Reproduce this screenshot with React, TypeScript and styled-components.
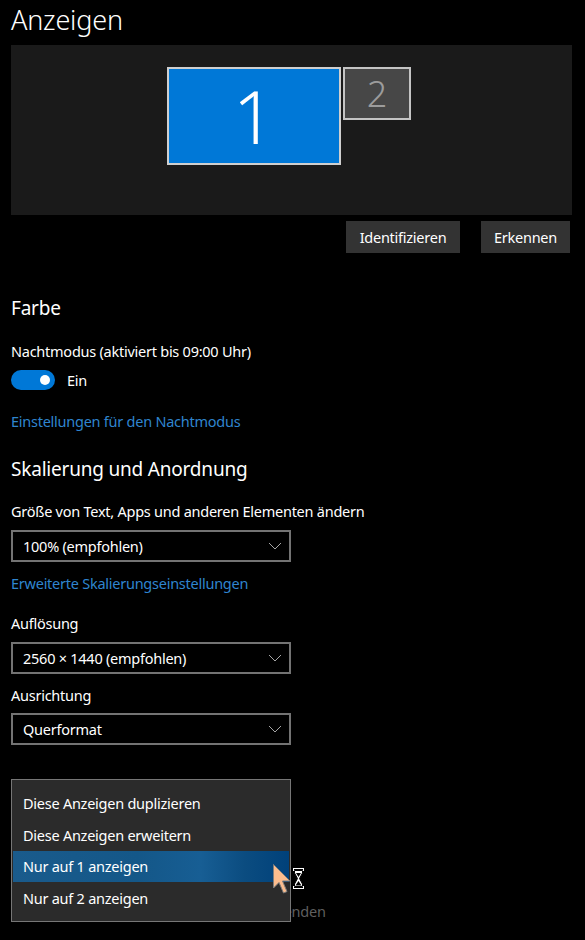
import React from "react";
import styled, { createGlobalStyle } from "styled-components";

const Global = createGlobalStyle`
  html, body { margin: 0; padding: 0; background: #000; }
  body { font-family: "Noto Sans", "Open Sans", sans-serif; color: #fff; }
  * { box-sizing: border-box; }
`;

const Page = styled.div`
  width: 585px;
  height: 940px;
  overflow: hidden;
  padding: 0 13px 0 11px;
  background: #000;
  display: flex;
  flex-direction: column;
`;

const Title = styled.h1`
  margin: 0;
  font-size: 27px;
  letter-spacing: -0.2px;
  font-weight: 300;
  line-height: 40px;
  height: 40px;
  color: #fff;
`;

const Preview = styled.div`
  margin-top: 5px;
  height: 170px;
  background: #1a1a1a;
  display: flex;
  justify-content: center;
  align-items: flex-start;
  gap: 2px;
  padding-top: 22px;
  padding-right: 5px;
`;

const Monitor = styled.div<{ $w: number; $h: number; $active?: boolean }>`
  width: ${(p) => p.$w}px;
  height: ${(p) => p.$h}px;
  border: 2px solid ${(p) => (p.$active ? "#cfcfcf" : "#c4c4c4")};
  background: ${(p) => (p.$active ? "#0078d7" : "#474747")};
  color: ${(p) => (p.$active ? "#fff" : "#9c9c9c")};
  display: flex;
  align-items: center;
  justify-content: center;
  font-weight: 300;
  font-size: ${(p) => (p.$active ? 74 : 36)}px;
  line-height: 1;
`;

const ButtonRow = styled.div`
  margin-top: 6px;
  display: flex;
  justify-content: flex-end;
  gap: 21px;
  padding-right: 2px;
`;

const Button = styled.button<{ $w: number }>`
  width: ${(p) => p.$w}px;
  height: 32px;
  background: #333;
  border: none;
  color: #fff;
  font-family: inherit;
  font-size: 14.5px;
  letter-spacing: -0.25px;
  padding: 0;
`;

const Heading = styled.h2<{ $mt: number }>`
  margin: ${(p) => p.$mt}px 0 0;
  font-size: 19px;
  letter-spacing: -0.2px;
  font-weight: 400;
  line-height: 28px;
  color: #fff;
`;

const Label = styled.div<{ $mt: number; $muted?: boolean }>`
  margin-top: ${(p) => p.$mt}px;
  font-size: 14.5px;
  letter-spacing: -0.25px;
  line-height: 20px;
  color: ${(p) => (p.$muted ? "#5f5f5f" : "#fff")};
`;

const Link = styled.a<{ $mt: number }>`
  margin-top: ${(p) => p.$mt}px;
  font-size: 14.5px;
  letter-spacing: -0.25px;
  line-height: 20px;
  color: #2f85cf;
  text-decoration: none;
`;

const ToggleRow = styled.div`
  margin-top: 9px;
  display: flex;
  align-items: center;
  gap: 12px;
  height: 20px;
  font-size: 14.5px;
  letter-spacing: -0.25px;
`;

const Toggle = styled.div`
  width: 44px;
  height: 20px;
  border-radius: 10px;
  background: #0078d7;
  display: flex;
  align-items: center;
  justify-content: flex-end;
  padding-right: 5px;
  &::after {
    content: "";
    width: 10px;
    height: 10px;
    border-radius: 50%;
    background: #fff;
  }
`;

const Select = styled.div<{ $mt: number }>`
  margin-top: ${(p) => p.$mt}px;
  width: 280px;
  height: 32px;
  border: 2px solid #737373;
  display: flex;
  align-items: center;
  justify-content: space-between;
  padding: 0 7px 0 10px;
  font-size: 14.5px;
  letter-spacing: -0.25px;
  color: #fff;
`;

const Chevron = () => (
  <svg width="14" height="8" viewBox="0 0 14 8">
    <path d="M1 1 L7 7 L13 1" fill="none" stroke="#a6a6a6" strokeWidth="1" />
  </svg>
);

const MultiSection = styled.div`
  position: relative;
  margin-top: 34px;
  display: flex;
  flex-direction: column;
`;

const CheckRow = styled.div`
  margin-top: 25px;
  display: flex;
  align-items: center;
  gap: 8px;
  height: 20px;
  font-size: 14.5px;
  letter-spacing: -0.25px;
  color: #5f5f5f;
`;

const CheckBox = styled.div`
  width: 20px;
  height: 20px;
  border: 2px solid #5f5f5f;
`;

const Popup = styled.div`
  position: absolute;
  top: 0;
  left: 0;
  width: 280px;
  height: 143px;
  background: #2b2b2b;
  border: 1px solid #767676;
  padding: 7px 1px;
  display: flex;
  flex-direction: column;
`;

const MenuItem = styled.div<{ $selected?: boolean }>`
  height: 32px;
  display: flex;
  align-items: center;
  padding-left: 10px;
  font-size: 14.5px;
  letter-spacing: -0.25px;
  color: #fff;
  background: ${(p) =>
    p.$selected
      ? "linear-gradient(90deg, #1a5b8c 0%, #145788 45%, #175e94 68%, #0b4c80 84%, #00417a 100%)"
      : "transparent"};
`;

const Cursor = styled.svg`
  position: absolute;
  left: 262px;
  top: 85px;
`;

export default function App() {
  return (
    <>
      <Global />
      <Page>
        <Title>Anzeigen</Title>
        <Preview>
          <Monitor $w={174} $h={98} $active>1</Monitor>
          <Monitor $w={68} $h={53}>2</Monitor>
        </Preview>
        <ButtonRow>
          <Button $w={114}>Identifizieren</Button>
          <Button $w={89}>Erkennen</Button>
        </ButtonRow>

        <Heading $mt={41}>Farbe</Heading>
        <Label $mt={19}>Nachtmodus (aktiviert bis 09:00 Uhr)</Label>
        <ToggleRow>
          <Toggle />
          <span>Ein</span>
        </ToggleRow>
        <Link $mt={21}>Einstellungen für den Nachtmodus</Link>

        <Heading $mt={24}>Skalierung und Anordnung</Heading>
        <Label $mt={18}>Größe von Text, Apps und anderen Elementen ändern</Label>
        <Select $mt={9}>
          <span>100% (empfohlen)</span>
          <Chevron />
        </Select>
        <Link $mt={11}>Erweiterte Skalierungseinstellungen</Link>
        <Label $mt={20}>Auflösung</Label>
        <Select $mt={9}>
          <span>2560 × 1440 (empfohlen)</span>
          <Chevron />
        </Select>
        <Label $mt={11}>Ausrichtung</Label>
        <Select $mt={8}>
          <span>Querformat</span>
          <Chevron />
        </Select>

        <MultiSection>
          <Label $mt={36}>Mehrere Bildschirme</Label>
          <Select $mt={9}>
            <span>Nur auf 1 anzeigen</span>
            <Chevron />
          </Select>
          <CheckRow>
            <CheckBox />
            <span>Diese Anzeige als Hauptanzeige verwenden</span>
          </CheckRow>

          <Popup>
            <MenuItem>Diese Anzeigen duplizieren</MenuItem>
            <MenuItem>Diese Anzeigen erweitern</MenuItem>
            <MenuItem $selected>Nur auf 1 anzeigen</MenuItem>
            <MenuItem>Nur auf 2 anzeigen</MenuItem>
          </Popup>

          <Cursor width="44" height="34" viewBox="0 0 44 34">
            <path
              d="M0.5 0.5 L0.5 24 L6 18.5 L10.5 29 L14 27.5 L9.5 17 L17 17 Z"
              fill="#fbbd8e"
              stroke="#7d7d7d"
              strokeWidth="1"
            />
            <g transform="translate(20,4)">
              <rect x="0.5" y="0.5" width="10" height="2" fill="#000" stroke="#fff" strokeWidth="1" />
              <rect x="0.5" y="18.5" width="10" height="2" fill="#000" stroke="#fff" strokeWidth="1" />
              <path d="M1.5 2.5 L9.5 2.5 L9.5 5 L6.5 10.5 L9.5 16 L9.5 18.5 L1.5 18.5 L1.5 16 L4.5 10.5 L1.5 5 Z" fill="#fff" stroke="#000" strokeWidth="1" />
              <path d="M3 5 L8 5 L5.5 9 Z" fill="#000" />
              <path d="M5.5 13 L8.5 17.5 L2.5 17.5 Z" fill="#000" />
            </g>
          </Cursor>
        </MultiSection>
      </Page>
    </>
  );
}
